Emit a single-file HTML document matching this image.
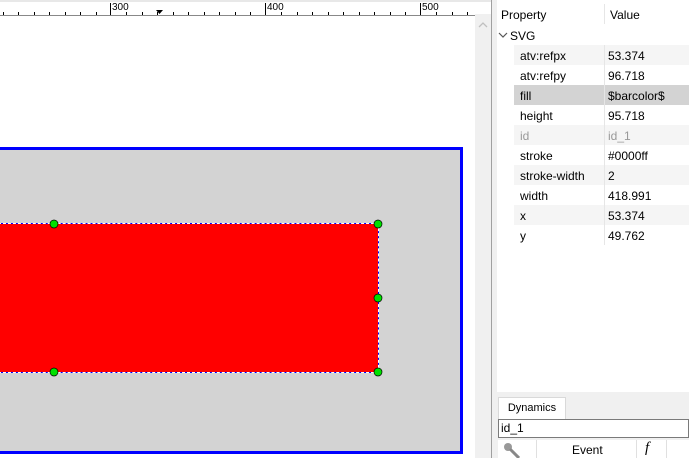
<!DOCTYPE html>
<html><head><style>
body{margin:0;width:689px;height:458px;overflow:hidden;background:#fff;font-family:"Liberation Sans",sans-serif;font-size:12px;position:relative}
.a{position:absolute}
.row{position:absolute;left:514px;width:175px;height:20px;line-height:22px}
.row span{position:absolute;left:6px}
.row b{font-weight:normal;position:absolute;left:94px}
.row i{position:absolute;left:90px;top:0;width:1px;height:20px;background:#e6e6e6}
</style></head><body>
<div class="a" style="left:0;top:0;width:475px;height:15px;background:#fff;border-bottom:1px solid #888"></div>
<div class="a" style="left:0;top:0;width:689px;height:2px;background:#e8e8e8"></div>
<svg class="a" style="left:0;top:0" width="475" height="16">
<g stroke="#000" stroke-width="1">
<line x1="110.5" y1="3" x2="110.5" y2="15"/><line x1="265.5" y1="3" x2="265.5" y2="15"/><line x1="420.5" y1="3" x2="420.5" y2="15"/>
<path d="M3.5 12v3M18.5 12v3M34.5 12v3M49.5 12v3M65.5 12v3M80.5 12v3M96.5 12v3M126.5 12v3M142.5 12v3M157.5 12v3M173.5 12v3M188.5 12v3M204.5 12v3M219.5 12v3M235.5 12v3M250.5 12v3M281.5 12v3M297.5 12v3M312.5 12v3M328.5 12v3M343.5 12v3M359.5 12v3M374.5 12v3M390.5 12v3M405.5 12v3M436.5 12v3M452.5 12v3M467.5 12v3"/>
</g>
<path d="M156 10h7l-3.5 4z" fill="#000"/>
<text x="112" y="10" font-size="10" fill="#000">300</text><text x="267" y="10" font-size="10">400</text><text x="422" y="10" font-size="10">500</text>
</svg>
<div class="a" style="left:475px;top:14px;width:16px;height:444px;background:#f0f0f0"></div>
<svg class="a" style="left:477px;top:20px" width="12" height="10"><path d="M2 7l4-4 4 4" fill="none" stroke="#c0c0c0" stroke-width="1.3"/></svg>
<div class="a" style="left:491px;top:0;width:1px;height:458px;background:#a0a0a0"></div>
<div class="a" style="left:492px;top:0;width:5px;height:458px;background:#f0f0f0"></div>
<div class="a" style="left:-4px;top:147px;width:464px;height:301px;background:#d3d3d3;border:3px solid #0000ff;border-left:none"></div>
<div class="a" style="left:-2px;top:223px;width:379px;height:148px;background:#f00;border:1px solid #0000ff;outline:1px dashed #fff;outline-offset:-1px"></div>
<svg class="a" style="left:0;top:0" width="475" height="458">
<g fill="#00e000" stroke="#000" stroke-width="0.7">
<circle cx="54" cy="224" r="4"/><circle cx="378" cy="224" r="4"/><circle cx="378" cy="298" r="4"/><circle cx="54" cy="372" r="4"/><circle cx="378" cy="372" r="4"/>
</g></svg>
<div class="a" style="left:497px;top:0;width:192px;height:395px;background:#fff"></div>
<div class="a" style="left:501px;top:8px">Property</div>
<div class="a" style="left:604px;top:4px;width:1px;height:20px;background:#e6e6e6"></div>
<div class="a" style="left:610px;top:8px">Value</div>
<svg class="a" style="left:498px;top:31px" width="10" height="8"><path d="M1 2l4 4 4-4" fill="none" stroke="#555" stroke-width="1.2"/></svg>
<div class="a" style="left:510px;top:29px">SVG</div>
<div class="row" style="top:45px;background:#f5f5f5"><span>atv:refpx</span><i></i><b>53.374</b></div>
<div class="row" style="top:65px"><span>atv:refpy</span><i></i><b>96.718</b></div>
<div class="row" style="top:85px;background:#d3d3d3"><span>fill</span><i></i><b>$barcolor$</b></div>
<div class="row" style="top:105px"><span>height</span><i></i><b>95.718</b></div>
<div class="row" style="top:125px;background:#f5f5f5;color:#999"><span>id</span><i></i><b>id_1</b></div>
<div class="row" style="top:145px"><span>stroke</span><i></i><b>#0000ff</b></div>
<div class="row" style="top:165px;background:#f5f5f5"><span>stroke-width</span><i></i><b>2</b></div>
<div class="row" style="top:185px"><span>width</span><i></i><b>418.991</b></div>
<div class="row" style="top:205px;background:#f5f5f5"><span>x</span><i></i><b>53.374</b></div>
<div class="row" style="top:225px"><span>y</span><i></i><b>49.762</b></div>
<div class="a" style="left:497px;top:392px;width:192px;height:66px;background:#f0f0f0"></div>
<div class="a" style="left:498px;top:397px;width:66px;height:21px;background:#fff;border:1px solid #d9d9d9;border-bottom:none;font-size:11px;line-height:21px;text-align:center">Dynamics</div>
<div class="a" style="left:498px;top:419px;width:191px;height:19px;background:#fff;border:1px solid #7a7a7a;box-sizing:border-box;line-height:17px;padding-left:2px">id_1</div>
<div class="a" style="left:498px;top:440px;width:191px;height:18px;background:#fff"></div>
<div class="a" style="left:536px;top:440px;width:1px;height:18px;background:#e0e0e0"></div>
<div class="a" style="left:636px;top:440px;width:1px;height:18px;background:#e0e0e0"></div>
<div class="a" style="left:666px;top:440px;width:1px;height:18px;background:#e0e0e0"></div>
<div class="a" style="left:572px;top:443px">Event</div>
<div class="a" style="left:645px;top:440px;font-family:'Liberation Serif',serif;font-style:italic;font-size:15px">f</div>
<svg class="a" style="left:502px;top:441px" width="18" height="17"><circle cx="6" cy="6" r="4" fill="#999"/><path d="M8 8l9 9" stroke="#888" stroke-width="3"/></svg>
</body></html>
